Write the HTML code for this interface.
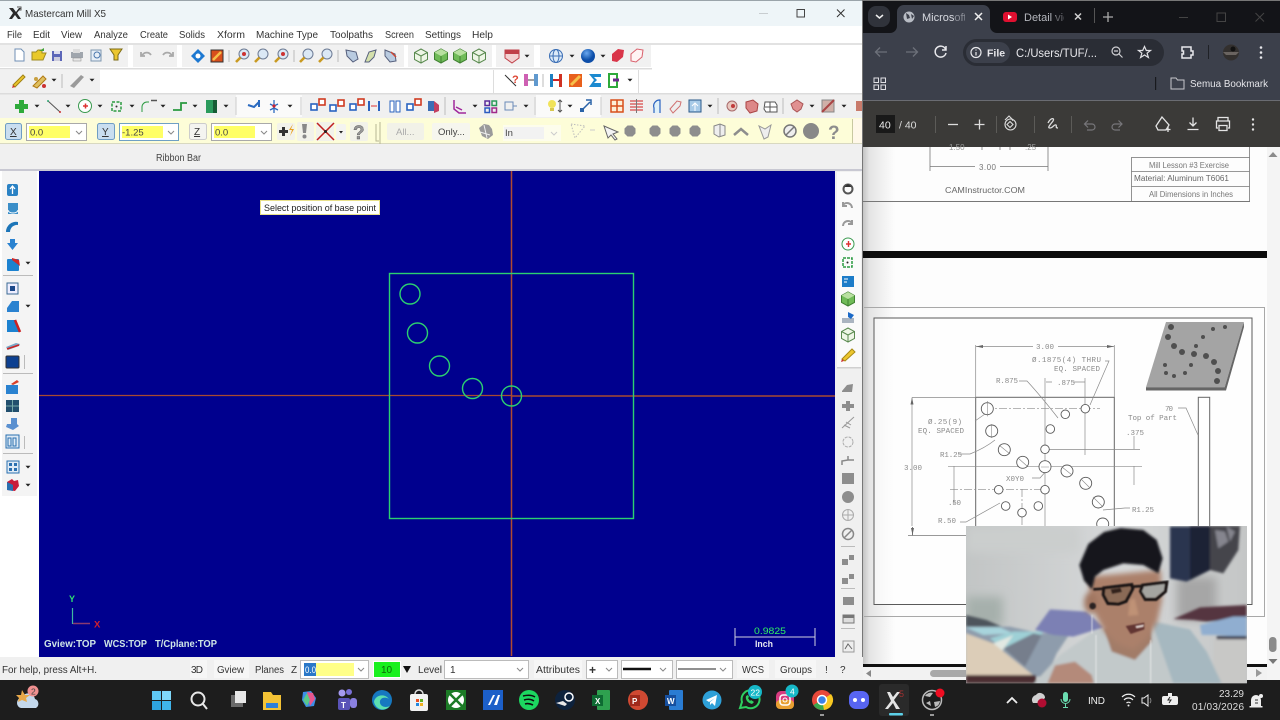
<!DOCTYPE html>
<html><head><meta charset="utf-8"><title>Mastercam Mill X5</title>
<style>
html,body{margin:0;padding:0;background:#1c1c1c;width:1280px;height:720px;overflow:hidden}
svg{display:block;font-family:"Liberation Sans",sans-serif;filter:blur(.3px)}
text{white-space:pre}
.m{font-size:10.5px;fill:#333}
.d{font-family:"Liberation Mono",monospace;font-size:7.5px;fill:#8a8a8a}
.dl{stroke:#8a8a8a;stroke-width:.7;fill:none}
.c{fill:#fff;stroke:#5a5a5a;stroke-width:.9}
.g{fill:#8d8d8d}
</style></head><body>
<svg width="1280" height="720" viewBox="0 0 1280 720" xmlns="http://www.w3.org/2000/svg">
<defs>
<filter id="b1"><feGaussianBlur stdDeviation=".35"/></filter>
<filter id="b0"><feGaussianBlur stdDeviation="2"/></filter>
<filter id="b2"><feGaussianBlur stdDeviation="4"/></filter>
<filter id="b4"><feGaussianBlur stdDeviation="8"/></filter>
<filter id="b3"><feGaussianBlur stdDeviation="14"/></filter>
<clipPath id="cam"><rect x="18" y="18" width="843" height="472"/></clipPath>
<clipPath id="tab1"><rect x="920" y="5" width="45" height="24"/></clipPath>
<clipPath id="tab2"><rect x="1022" y="5" width="42" height="24"/></clipPath>
<clipPath id="part"><rect x="864" y="308" width="400" height="218"/></clipPath>
<linearGradient id="wall" x1="0" x2="1"><stop offset="0" stop-color="#c2c5c5"/><stop offset=".55" stop-color="#d6d8d9"/><stop offset="1" stop-color="#c4c6c6"/></linearGradient>
<linearGradient id="edge" x1="0" x2="1"><stop offset="0" stop-color="#c4c4c4"/><stop offset=".2" stop-color="#e4e4e4"/><stop offset="1" stop-color="#e4e4e4" stop-opacity="0"/></linearGradient>
<radialGradient id="sph" cx=".4" cy=".3"><stop offset="0" stop-color="#6aa8ef"/><stop offset="1" stop-color="#0b4ea8"/></radialGradient>
<g id="dr"><path d="M-2.5 -1.3H2.5L0 1.5Z" fill="#222"/></g>
<g id="cube"><path d="M0-7 6.5-3.5V3.5L0 7-6.5 3.5V-3.5Z" fill="#eef6e6" stroke="#5a8a50"/><path d="M-6.5-3.5 0 0 6.5-3.5M0 0V7" fill="none" stroke="#5a8a50"/></g>
<g id="cubeg"><path d="M0-7 6.5-3.5V3.5L0 7-6.5 3.5V-3.5Z" fill="#6fbb58" stroke="#3f8030"/><path d="M-6.5-3.5 0 0 6.5-3.5 0-7Z" fill="#b8e0a0"/><path d="M0 0V7" stroke="#3f8030"/></g>
<g id="zoom"><circle cx="1" cy="-2" r="5" fill="#dbe8f5" stroke="#6c7a94"/><path d="M-2.5 1.5-7 6" stroke="#c99a20" stroke-width="2.6"/></g>
<g id="dot"><path d="M-5.5-2.5-2.5-5.5H2.5L5.5-2.5V2.5L2.5 5.5H-2.5L-5.5 2.5Z" fill="#8d8d8d"/></g>
<g id="xf"><rect x="-7" y="-2" width="6" height="6" fill="#fff" stroke="#2a63c0" stroke-width="1.6"/><rect x="1" y="-7" width="6" height="6" fill="#fff" stroke="#cf3a20" stroke-width="1.6"/></g>
</defs>

<!-- LEFT WINDOW -->
<rect width="863" height="681" fill="#f0f0f0"/>
<rect width="863" height="26" fill="#eef5f8"/>
<rect width="863" height="1" fill="#9aa4aa"/>
<path d="M9 8 13 8 16 12 19 8 21 8 17 13 21 19 18 19 15 15 12 19 9 19 13 13Z" fill="#2a2a2a"/><path d="M17 7h4v3h-2" fill="none" stroke="#555"/>
<text x="25" y="17" font-size="10.5" fill="#333" textLength="81" lengthAdjust="spacingAndGlyphs">Mastercam Mill X5</text>
<rect x="759" y="13" width="9" height="1" fill="#c8cdd0"/>
<rect x="797" y="9.5" width="7.5" height="7.5" fill="none" stroke="#444"/>
<path d="M837 9.500 844.500 17M844.500 9.500 837 17" stroke="#333" stroke-width="1"/>
<rect y="26" width="863" height="17" fill="#fff"/>
<g class="m">
<text x="7" y="38" textLength="15" lengthAdjust="spacingAndGlyphs">File</text><text x="33" y="38" textLength="17" lengthAdjust="spacingAndGlyphs">Edit</text><text x="61" y="38" textLength="21" lengthAdjust="spacingAndGlyphs">View</text><text x="94" y="38" textLength="34" lengthAdjust="spacingAndGlyphs">Analyze</text><text x="140" y="38" textLength="28" lengthAdjust="spacingAndGlyphs">Create</text><text x="179" y="38" textLength="26" lengthAdjust="spacingAndGlyphs">Solids</text><text x="217" y="38" textLength="28" lengthAdjust="spacingAndGlyphs">Xform</text><text x="256" y="38" textLength="62" lengthAdjust="spacingAndGlyphs">Machine Type</text><text x="330" y="38" textLength="43" lengthAdjust="spacingAndGlyphs">Toolpaths</text><text x="385" y="38" textLength="29" lengthAdjust="spacingAndGlyphs">Screen</text><text x="425" y="38" textLength="36" lengthAdjust="spacingAndGlyphs">Settings</text><text x="472" y="38" textLength="21" lengthAdjust="spacingAndGlyphs">Help</text>
</g>
<!-- toolbar backgrounds -->
<rect y="43" width="863" height="2" fill="#e2e2e2"/>
<rect x="0" y="45" width="863" height="24" fill="#fff"/>
<rect x="0" y="69" width="863" height="25" fill="#fff"/>
<rect y="94" width="863" height="24" fill="#f0f0f0"/>
<rect y="68" width="652" height="1.500" fill="#dcdcdc"/>
<rect x="0" y="45" width="128" height="22" fill="#f1f1f1"/><rect x="133" y="45" width="44" height="22" fill="#f1f1f1"/><rect x="182" y="45" width="222" height="22" fill="#f1f1f1"/><rect x="408" y="45" width="84" height="22" fill="#f1f1f1"/><rect x="496" y="45" width="38" height="22" fill="#f1f1f1"/><rect x="540" y="45" width="111" height="22" fill="#f1f1f1"/>
<rect x="0" y="70" width="100" height="23" fill="#f1f1f1"/><rect x="493" y="70" width="1" height="23" fill="#ddd"/><rect x="638" y="70" width="1" height="23" fill="#ddd"/>
<rect y="93" width="863" height="1.500" fill="#dcdcdc"/>
<rect x="236" y="95" width="66" height="22" fill="#fafafa"/><rect x="536" y="95" width="65" height="22" fill="#fafafa"/>

<!-- toolbar 1 icons -->
<g filter="url(#b1)">
<path d="M15 49h6l3 3v9H15Z" fill="#fff" stroke="#6f8fb5"/>
<path d="M32 60V52h4l2-2h4v3h4l-3 7Z" fill="#e9c92c" stroke="#a08b20"/><path d="M39 51l5-3v3" fill="#45a33a"/>
<rect x="52" y="51" width="10" height="10" fill="#5b66b8"/><rect x="54" y="51" width="6" height="3" fill="#dde"/><rect x="54" y="57" width="6" height="4" fill="#ccd"/>
<path d="M71 52h12v6H71Z" fill="#a0a6ad"/><rect x="73" y="49" width="7" height="4" fill="#ddd"/><rect x="73" y="58" width="8" height="3" fill="#e8e8e8" stroke="#888" stroke-width=".5"/>
<rect x="91" y="50" width="10" height="11" fill="#e7eef6" stroke="#7d96b0"/><circle cx="97" cy="55" r="3" fill="none" stroke="#4a77ad"/>
<path d="M110 49h12l-4 6v5h-4v-5Z" fill="#ecc62e" stroke="#7b6a14"/>
<path d="M142 56a5 5 0 0 1 9-1M141 52v4h4" fill="none" stroke="#a9a9a9" stroke-width="1.800"/><path d="M172 56a5 5 0 0 0-9-1M173 52v4h-4" fill="none" stroke="#a9a9a9" stroke-width="1.800"/>
<path d="M198 49 205 56 198 63 191 56Z" fill="#1f78d1"/><circle cx="198" cy="56" r="2.500" fill="#fff"/>
<rect x="211" y="50" width="12" height="12" fill="#d8501c" stroke="#333"/><path d="M213 60 221 52" stroke="#f6c048" stroke-width="2.500"/>
<use href="#zoom" x="243" y="56"/><circle cx="244" cy="54" r="2" fill="#c33"/><line x1="229" y1="50" x2="229" y2="62" stroke="#bbb"/>
<use href="#zoom" x="262" y="56"/><use href="#zoom" x="282" y="56"/><circle cx="283" cy="54" r="2" fill="#c33"/><line x1="294" y1="50" x2="294" y2="62" stroke="#bbb"/>
<use href="#zoom" x="307" y="56"/><use href="#zoom" x="326" y="56"/><line x1="338" y1="50" x2="338" y2="62" stroke="#bbb"/>
<path d="M346 50l10 2 2 7-5 3-6-6Z" fill="#b9cbe0" stroke="#555f7c"/><path d="M365 62l4-10 7-2-2 7-5 5Z" fill="#d4e0ac" stroke="#555f7c"/><path d="M385 50l10 4 1 7-6 1-5-6Z" fill="#b9cbe0" stroke="#555f7c"/><path d="M391 52l5 5" stroke="#c43" stroke-width="1.500"/>
<use href="#cube" x="421" y="56"/><use href="#cubeg" x="441" y="56"/><use href="#cubeg" x="460" y="56"/><use href="#cube" x="479" y="56"/>
<path d="M505 50h14v8l-7 5-7-5Z" fill="#f3d2d2" stroke="#c0404a"/><rect x="505" y="50" width="14" height="4" fill="#c0404a"/><use href="#dr" x="527" y="56"/>
<circle cx="556" cy="56" r="6.500" fill="#dceaf8" stroke="#3a6eb5"/><ellipse cx="556" cy="56" rx="3" ry="6.500" fill="none" stroke="#3a6eb5"/><path d="M549.500 56h13" stroke="#3a6eb5"/><use href="#dr" x="572" y="56"/>
<circle cx="588" cy="56" r="7" fill="url(#sph)"/><use href="#dr" x="603" y="56"/>
<path d="M612 54l6-5 6 1-1 7-6 5-5-1Z" fill="#d9364a"/><path d="M631 54l6-5 6 1-1 7-6 5-5-1Z" fill="#fff4f4" stroke="#d9606c"/>
</g>
<!-- toolbar 2 icons -->
<g filter="url(#b1)">
<path d="M13 85 23 75l2 2-10 10Z" fill="#ecc62e" stroke="#a08214"/><path d="M12 88l3-1-2-2Z" fill="#c33"/>
<path d="M33 86 43 76l3 3-9 9Z" fill="#dfc060" stroke="#b07a14"/><circle cx="36" cy="79" r="2" fill="#c8a040"/><circle cx="44" cy="86" r="2" fill="#c33"/><use href="#dr" x="54" y="80"/>
<line x1="62" y1="74" x2="62" y2="88" stroke="#bbb"/>
<path d="M70 86 81 75l3 2-10 11Z" fill="#9a9a9a"/><use href="#dr" x="92" y="80"/>
<path d="M505 75 516 86" stroke="#333"/><text x="512" y="83" font-size="11" font-weight="bold" fill="#d43">?</text>
<rect x="524" y="74" width="4" height="12" fill="#c23aa0" opacity=".8"/><rect x="534" y="74" width="4" height="12" fill="#3a7fc2" opacity=".8"/><path d="M528 80h6" stroke="#444"/>
<line x1="543" y1="74" x2="543" y2="87" stroke="#bbb"/>
<rect x="550" y="74" width="3" height="13" fill="#1d7fc0"/><path d="M553 80h6" stroke="#d02020" stroke-width="2"/><rect x="559" y="74" width="3" height="13" fill="#d03020"/>
<rect x="569" y="74" width="13" height="13" fill="#e8601c"/><path d="M571 85 580 76" stroke="#f6c048" stroke-width="3"/>
<path d="M589 74h12v3h-7l3 3-3 3h7v4H589l5-7Z" fill="#1d8ad0"/>
<rect x="609" y="74" width="8" height="13" fill="#fff" stroke="#2eaa3a" stroke-width="2"/><path d="M613 80h6" stroke="#6a2a8a" stroke-width="3"/><use href="#dr" x="630" y="80"/>
</g>
<!-- toolbar 3 icons -->
<g filter="url(#b1)">
<path d="M19 100h5v4h4v5h-4v4h-5v-4h-4v-5h4Z" fill="#2eaa3a"/><use href="#dr" x="37" y="106"/>
<path d="M48 101 60 112" stroke="#555"/><circle cx="48" cy="101" r="1" fill="#3a7"/><circle cx="60" cy="112" r="1" fill="#c33"/><use href="#dr" x="68" y="106"/>
<circle cx="85" cy="106" r="6.500" fill="#fff" stroke="#3a9a50"/><path d="M83 106h5M85.500 103.500v5" stroke="#d33" stroke-width="1.500"/><use href="#dr" x="100" y="106"/>
<rect x="112" y="102" width="9" height="9" fill="none" stroke="#2a9a40" stroke-dasharray="3 1.500" stroke-width="1.500"/><circle cx="116.500" cy="106.500" r="1" fill="#333"/><use href="#dr" x="132" y="106"/>
<path d="M142 112v-5a5 5 0 0 1 5-5h2" fill="none" stroke="#2a9a40"/><path d="M151 100.500h6" stroke="#555" stroke-width="1.500"/><use href="#dr" x="163" y="106"/>
<path d="M173 110h8v-7h6" fill="none" stroke="#2a9a40" stroke-width="1.800"/><use href="#dr" x="195" y="106"/>
<rect x="206" y="100" width="11" height="13" fill="#2c9a5c"/><rect x="213" y="100" width="4" height="13" fill="#145c34"/><use href="#dr" x="226" y="106"/>
<line x1="236" y1="97" x2="236" y2="115" stroke="#ccc"/>
<path d="M248 105l6 2 5-5M259 100v7" fill="none" stroke="#2a6ac0" stroke-width="2"/><path d="M274 100v13M270 104l4 2 4-2M270 110l4-2 4 2" fill="none" stroke="#2a6ac0" stroke-width="1.300"/><circle cx="274" cy="106" r="1.600" fill="#c23"/><use href="#dr" x="290" y="106"/>
<line x1="301" y1="97" x2="301" y2="115" stroke="#ccc"/>
<use href="#xf" x="318" y="106"/><use href="#xf" x="337" y="107"/><use href="#xf" x="357" y="106"/>
<path d="M369 101v10M379 101v10" stroke="#2a63c0" stroke-width="2"/><path d="M371 106h6" stroke="#d33"/>
<rect x="390" y="101" width="4" height="11" fill="#fff" stroke="#2a63c0"/><rect x="396" y="101" width="4" height="11" fill="#fff" stroke="#2a63c0"/>
<use href="#xf" x="414" y="106"/><path d="M428 101h6v10h-6" fill="#3a6eb5"/><path d="M434 101 439 105v6l-5 2Z" fill="#c34060"/>
<line x1="445" y1="97" x2="445" y2="115" stroke="#bbb"/>
<path d="M454 100v9l5 4h7M456 107l6 3" fill="none" stroke="#a0289c" stroke-width="1.500"/><use href="#dr" x="475" y="106"/>
<rect x="485" y="101" width="4.500" height="4.500" fill="none" stroke="#5a2a9a" stroke-width="1.500"/><rect x="492" y="101" width="4.500" height="4.500" fill="none" stroke="#2a9a5a" stroke-width="1.500"/><rect x="485" y="108" width="4.500" height="4.500" fill="none" stroke="#2a5ac0" stroke-width="1.500"/><rect x="492" y="108" width="4.500" height="4.500" fill="none" stroke="#a02a8a" stroke-width="1.500"/>
<rect x="505" y="102" width="8" height="8" fill="none" stroke="#6a8ab8"/><path d="M513 106h4" stroke="#6a8ab8"/><use href="#dr" x="526" y="106"/>
<line x1="535" y1="97" x2="535" y2="115" stroke="#ccc"/>
<circle cx="552" cy="104" r="4" fill="#f1e35a"/><rect x="550" y="108" width="4" height="3" fill="#d8c850"/><path d="M560 100v12M558 102l2-2 2 2M558 110l2 2 2-2" stroke="#555" fill="none"/><use href="#dr" x="570" y="106"/>
<path d="M581 111l9-9M586 100h5v5" stroke="#2a63a8" fill="none" stroke-width="1.500"/><rect x="580" y="108" width="4" height="4" fill="#2a63a8"/>
<line x1="601" y1="97" x2="601" y2="115" stroke="#ccc"/>
<rect x="611" y="100" width="12" height="12" fill="#fdf0d8" stroke="#d8501c" stroke-width="1.500"/><path d="M617 100v12M611 106h12" stroke="#d8501c" stroke-width="1.500"/>
<path d="M630 101h13M630 104h13M630 107h13M630 110h13" stroke="#d84a4a" stroke-width="1.300"/><path d="M636.500 99v14" stroke="#777"/>
<path d="M654 113v-5a6 6 0 0 1 6-8v13" fill="#dff0f8" stroke="#2a63c0" stroke-width="1.200"/>
<path d="M670 109l7-8 4 1-1 4-7 7Z" fill="#eee" stroke="#d07070"/>
<rect x="689" y="100" width="12" height="12" fill="#a8cbe8" stroke="#2a5a8a"/><path d="M695 103v8M692 106l3-3 3 3" stroke="#fff" fill="none"/><use href="#dr" x="710" y="106"/>
<line x1="718" y1="98" x2="718" y2="114" stroke="#bbb"/>
<circle cx="732" cy="106" r="5" fill="#e8c8c0" stroke="#a86a6a"/><circle cx="733" cy="106" r="2" fill="#c03a3a"/>
<path d="M746 102l7-2 5 4-1 7-7 2-4-5Z" fill="#d88" stroke="#a44"/>
<path d="M765 102h10l2 3v7h-11l-2-3Z" fill="#fff" stroke="#555"/><path d="M770 102v10M765 107h12" stroke="#555"/>
<line x1="783" y1="98" x2="783" y2="114" stroke="#bbb"/>
<path d="M791 104l6-4 6 4-2 5-4 3-4-3Z" fill="#e09090" stroke="#a55"/><use href="#dr" x="812" y="106"/>
<rect x="822" y="100" width="12" height="12" fill="#d0b0a8" stroke="#888"/><path d="M822 112 834 100" stroke="#a44" stroke-width="2"/><use href="#dr" x="844" y="106"/>
<rect x="856" y="101" width="6" height="10" fill="#c87a6a"/>
</g>

<!-- yellow bar -->
<rect y="118" width="863" height="26" fill="#fdfdd8"/>
<rect y="143" width="863" height="1" fill="#d8d8c0"/>
<rect x="5.500" y="123.500" width="16" height="16" rx="2" fill="#c9def0" stroke="#6f9dc4"/>
<text x="10" y="135" font-size="10" fill="#333" text-decoration="underline">X</text>
<rect x="26.500" y="123.500" width="60" height="17" fill="#fff" stroke="#a9a9a9"/><rect x="29" y="126" width="41" height="12" fill="#ffff66"/>
<text x="30" y="135.500" font-size="9.500" fill="#444">0.0</text><path d="M76 131l3 3 3-3" fill="none" stroke="#888"/>
<rect x="97.500" y="123.500" width="17" height="16" rx="2" fill="#c9def0" stroke="#6f9dc4"/>
<text x="102" y="135" font-size="10" fill="#333" text-decoration="underline">Y</text>
<rect x="119.500" y="123.500" width="59" height="17" fill="#fff" stroke="#6fa0c4"/><rect x="122" y="126" width="41" height="12" fill="#ffff66"/>
<text x="122" y="135.500" font-size="9.500" fill="#444">-1.25</text><path d="M168 131l3 3 3-3" fill="none" stroke="#888"/>
<rect x="189.500" y="123.500" width="17" height="16" rx="2" fill="#f4f4f0" stroke="#ccc"/>
<text x="194" y="135" font-size="10" fill="#333" text-decoration="underline">Z</text>
<rect x="211.500" y="123.500" width="60" height="17" fill="#fff" stroke="#a9a9a9"/><rect x="214" y="126" width="41" height="12" fill="#ffff66"/>
<text x="215" y="135.500" font-size="9.500" fill="#444">0.0</text><path d="M261 131l3 3 3-3" fill="none" stroke="#888"/>
<rect x="277" y="123" width="18" height="17" rx="2" fill="#f2f2ea"/><path d="M279 130h3v-3h3v3h3v3h-3v3h-3v-3h-3Z" fill="#333"/><path d="M293 124l-4 6h3l-2 6 4-7h-3Z" fill="#e8a020"/>
<rect x="297" y="122" width="17" height="19" rx="2" fill="#f2f2ea"/><path d="M302 124h5l-1 9h-3Z" fill="#888"/><circle cx="304.500" cy="136.500" r="2" fill="#888"/>
<rect x="316" y="122" width="18" height="19" fill="#f2f2ea"/><path d="M317 123 334 140M334 123 317 140" stroke="#c02020" stroke-width="1.500"/><circle cx="325.500" cy="131.500" r="1.500" fill="#222"/>
<rect x="336" y="124" width="10" height="16" rx="2" fill="#f4f4f0"/><path d="M339 131h4l-2 2.500Z" fill="#222"/>
<rect x="350" y="122" width="18" height="19" rx="2" fill="#f2f2ea"/><text x="353" y="139" font-size="19" font-weight="bold" fill="#999" stroke="#555" stroke-width=".4">?</text>
<path d="M376 124v17h3" fill="none" stroke="#b8b894"/><path d="M380 122v22" stroke="#b8b894"/>
<rect x="387" y="123" width="37" height="17" rx="2" fill="#f2f2e8"/><text x="396" y="135" font-size="9.500" fill="#aaa">All...</text>
<rect x="432" y="123" width="38" height="17" rx="2" fill="#f6f6ee"/><text x="438" y="135" font-size="9.500" fill="#444">Only...</text>
<path d="M479 128l5-4 5 1 3 4 1 6-5 4-6-3Z" fill="#9a9a9a"/><path d="M480 132l10 3M484 125l3 13" stroke="#eee"/>
<rect x="503" y="125" width="58" height="16" fill="#fdfdec"/><rect x="504" y="127" width="40" height="12" fill="#f2f2f2"/><text x="505" y="136" font-size="9.500" fill="#444">In</text><path d="M551 132l3 3 3-3" fill="none" stroke="#ccc"/>
<path d="M571 124l14 2-10 12Z" fill="none" stroke="#bbb" stroke-dasharray="1.500 1.500"/><path d="M590 130h5" stroke="#ccc"/>
<path d="M604 126l14 6-5 2 4 5-2 1-4-5-3 3Z" fill="#f4f4f4" stroke="#666"/>
<use href="#dot" x="630" y="131"/><use href="#dot" x="655" y="131"/><use href="#dot" x="675" y="131"/><use href="#dot" x="695" y="131"/>
<path d="M714 126l6-2 5 2v9l-6 2-5-3Z" fill="#eee" stroke="#888"/><path d="M720 124v13" stroke="#888"/><path d="M734 135l7-6 7 6" fill="none" stroke="#8d8d8d" stroke-width="2.500"/>
<path d="M759 126l6 3 6-4-3 12-4 2Z" fill="#eee" stroke="#999"/>
<circle cx="790" cy="131" r="6" fill="#eee" stroke="#777" stroke-width="1.500"/><path d="M786 135l8-8" stroke="#777" stroke-width="1.500"/>
<circle cx="811" cy="131" r="8" fill="#888"/>
<text x="828" y="139" font-size="19" font-weight="bold" fill="#8d8d8d">?</text>
<path d="M852.500 119v24" stroke="#c8c8a0"/><rect x="853" y="119" width="10" height="24" fill="#fff8e8"/>

<!-- ribbon -->
<rect y="144" width="863" height="26" fill="#f0f0f0"/>
<text x="156" y="161" font-size="10" fill="#444" textLength="45" lengthAdjust="spacingAndGlyphs">Ribbon Bar</text>
<rect y="169" width="863" height="2" fill="#c8c8d2"/>

<!-- left toolbar -->
<rect x="0" y="171" width="39" height="486" fill="#fff"/>
<rect x="2" y="171" width="35" height="325" fill="#f4f4f4"/>
<g filter="url(#b1)">
<rect x="7" y="184" width="11" height="12" rx="2" fill="#2b82c4"/><path d="M12.500 186v8M10 189l2.500-3 2.500 3" stroke="#fff" fill="none" stroke-width="1.300"/>
<path d="M8 203h10v11H8Z" fill="#3a8ec8"/><path d="M8 210a5 3 0 0 0 10 0" stroke="#fff" fill="none"/>
<path d="M6 232a10 10 0 0 1 12-10v3a7 7 0 0 0-8 7Z" fill="#1c74b8"/>
<path d="M10 239h5v4h3l-5.500 7-5.500-7h3Z" fill="#2b82d0"/>
<rect x="7" y="259" width="12" height="12" rx="1" fill="#1a82d0"/><path d="M12 258l7 2 1 6-8-6Z" fill="#cf2a2a"/><use href="#dr" x="28" y="263"/>
<rect x="3" y="275" width="30" height="1" fill="#bbb"/>
<rect x="7" y="283" width="11" height="11" fill="#eef" stroke="#3a6a94"/><rect x="10" y="286" width="5" height="5" fill="#1a4a8a"/>
<path d="M7 308l5-7h7v11H7Z" fill="#2b82d0"/><use href="#dr" x="28" y="306"/>
<path d="M7 320h8l5 10v2H7Z" fill="#1a82d0"/><path d="M15 320l5 12" stroke="#c22" stroke-width="2.500"/>
<path d="M6 347l10-4 4 1-1 2-11 4Z" fill="#7aa8c8"/><path d="M7 349l12-4" stroke="#c22" stroke-width="1.500"/>
<rect x="6" y="356" width="13" height="12" rx="1" fill="#0b3f90" stroke="#333"/><line x1="24.500" y1="355" x2="24.500" y2="369" stroke="#bbb"/>
<rect x="3" y="373" width="30" height="1" fill="#bbb"/>
<rect x="6" y="385" width="12" height="9" fill="#2b82d0"/><path d="M11 384l6-4 2 2-6 3Z" fill="#d8402a"/>
<rect x="6" y="400" width="13" height="12" fill="#23506e"/><path d="M12.500 400v12M6 406h13" stroke="#7aa" /> 
<path d="M7 424h4v-6h6v6l2 2-6 4-7-3Z" fill="#5a90d0"/>
<rect x="6" y="435" width="13" height="13" fill="#dfeaf5" stroke="#2a70b0"/><rect x="8" y="438" width="3" height="8" fill="none" stroke="#2a70b0"/><rect x="13" y="438" width="3" height="8" fill="none" stroke="#2a70b0"/><line x1="24.500" y1="436" x2="24.500" y2="449" stroke="#bbb"/>
<rect x="3" y="453" width="30" height="1" fill="#bbb"/>
<rect x="7" y="461" width="12" height="12" fill="#dfeaf5" stroke="#2a70b0"/><rect x="9" y="463" width="3" height="3" fill="#2a70b0"/><rect x="14" y="463" width="3" height="3" fill="#2a70b0"/><rect x="9" y="468" width="3" height="3" fill="#2a70b0"/><rect x="14" y="468" width="3" height="3" fill="#2a70b0"/><use href="#dr" x="28" y="467"/>
<path d="M7 482l5-3 2 2 4-1 1 6-4 5-8-1Z" fill="#c81e3a"/><path d="M7 482v8l6 1v-6Z" fill="#2a70b0"/><use href="#dr" x="28" y="485"/>
</g>

<!-- canvas -->
<rect x="39" y="171" width="796" height="486" fill="#00008e"/>
<path d="M511.500 171V656" stroke="#b04a30" stroke-width="1.500"/>
<path d="M39 395.500H512" stroke="#a84a30" stroke-width="1.200"/>
<path d="M512 396H835" stroke="#a84a30" stroke-width="1.500"/>
<g fill="none" stroke="#2cd070" stroke-width="1.400">
<rect x="389.500" y="273.500" width="244" height="245"/>
<circle cx="410" cy="294" r="10"/><circle cx="417.500" cy="333" r="10"/><circle cx="439.500" cy="366" r="10"/><circle cx="472.500" cy="388.500" r="10"/><circle cx="511.500" cy="396" r="10"/>
</g>
<rect x="260.500" y="200.500" width="119" height="14" fill="#fff" stroke="#e8e08a"/>
<text x="264" y="211" font-size="9" fill="#222" textLength="112" lengthAdjust="spacingAndGlyphs">Select position of base point</text>
<path d="M72.500 608V624" stroke="#3fb8a0" stroke-width="1.200"/><text x="69" y="602" font-size="9" font-weight="bold" fill="#2fe070">Y</text>
<path d="M73 623.500H90" stroke="#8a3a70" stroke-width="1.500"/><text x="94" y="627.500" font-size="9.500" font-weight="bold" fill="#d02030">X</text>
<g font-size="10" fill="#cfe6e6" font-weight="bold">
<text x="44" y="647" textLength="52" lengthAdjust="spacingAndGlyphs">Gview:TOP</text><text x="104" y="647" textLength="43" lengthAdjust="spacingAndGlyphs">WCS:TOP</text><text x="155" y="647" textLength="62" lengthAdjust="spacingAndGlyphs">T/Cplane:TOP</text>
</g>
<path d="M735 628V646M815 628V646M735 637H815" stroke="#d0d0e0"/>
<text x="754" y="634" font-size="9.500" fill="#30f060" textLength="32" lengthAdjust="spacingAndGlyphs">0.9825</text>
<text x="755" y="647" font-size="9.500" fill="#e8e8f0" font-weight="bold" textLength="18" lengthAdjust="spacingAndGlyphs">Inch</text>

<!-- right toolbar -->
<rect x="835" y="171" width="28" height="486" fill="#f0f0f0"/>
<rect x="837" y="172" width="24" height="195" fill="#fafafa"/>
<g filter="url(#b1)">
<circle cx="848" cy="189" r="4.500" fill="none" stroke="#555" stroke-width="2"/><path d="M844 187l4-3 4 3" fill="#333"/>
<path d="M843 208a5 5 0 0 1 9-3M852 202v4h-4" fill="none" stroke="#999" stroke-width="2" transform="matrix(-1 0 0 1 1695 0)"/>
<path d="M843 226a5 5 0 0 1 9-3M852 220v4h-4" fill="none" stroke="#999" stroke-width="2"/>
<circle cx="848" cy="244" r="6" fill="#fff" stroke="#3a9a50"/><path d="M846 244h5M848.500 241v6" stroke="#d33" stroke-width="1.400"/>
<rect x="843" y="258" width="9" height="9" fill="none" stroke="#2a9a40" stroke-width="1.500" stroke-dasharray="3 1"/><circle cx="847.500" cy="262.500" r="1" fill="#222"/>
<rect x="842" y="276" width="12" height="11" fill="#1a7cc8"/><path d="M844 279h4M844 282h3" stroke="#fff"/>
<use href="#cubeg" x="848" y="299"/>
<path d="M842 323v-5h12v5Z" fill="#aab4c0"/><path d="M848 312l6 3-3 4-3-2Z" fill="#1a6ac8"/>
<use href="#cube" x="848" y="335"/>
<path d="M842 359 852 349l3 3-10 9Z" fill="#ecc62e" stroke="#a88a14"/><path d="M841 362l3-1-2-2Z" fill="#c33"/>
<rect x="837" y="367" width="24" height="1.500" fill="#d0d0d0"/>
<path d="M842 391l5-6 6-1-1 8h-10Z" class="g"/>
<path d="M846 401h4v3h4v4h-4v3h-4v-3h-4v-4h4Z" class="g"/>
<path d="M842 428 854 417M844 425l6 3M846 422l5 3" stroke="#999" fill="none"/>
<circle cx="848" cy="442" r="5" fill="none" stroke="#aaa" stroke-dasharray="3 1"/>
<path d="M842 465v-4l6-1v-4M848 460h6" stroke="#888" fill="none" stroke-width="1.500"/>
<rect x="842" y="473" width="12" height="11" class="g"/>
<circle cx="848" cy="497" r="6" class="g"/>
<circle cx="848" cy="515" r="5.500" fill="none" stroke="#aaa"/><path d="M842.500 515h11M848 509.500v11" stroke="#aaa"/>
<circle cx="848" cy="534" r="5.500" fill="none" stroke="#888" stroke-width="1.500"/><path d="M844 538l8-8" stroke="#888" stroke-width="1.500"/>
<rect x="841" y="546" width="14" height="1" fill="#bbb"/>
<rect x="842" y="559" width="6" height="6" class="g"/><rect x="849" y="555" width="5" height="5" class="g"/>
<rect x="842" y="578" width="6" height="6" class="g"/><rect x="849" y="574" width="5" height="5" class="g"/>
<rect x="841" y="588" width="14" height="1" fill="#bbb"/>
<rect x="843" y="597" width="11" height="8" class="g"/>
<rect x="843" y="615" width="11" height="8" fill="#ddd" stroke="#777"/><rect x="843" y="615" width="11" height="3" fill="#777"/>
<rect x="841" y="628" width="14" height="1" fill="#bbb"/>
<rect x="843" y="641" width="11" height="11" fill="#eee" stroke="#999"/><path d="M845 649l3-5 4 5" stroke="#666" fill="none"/>
</g>
<rect x="862" y="0" width="1" height="681" fill="#777"/>

<!-- status bar -->
<rect y="657" width="863" height="23" fill="#f0f0f0"/>
<g font-size="10" fill="#333">
<text x="2" y="673" textLength="95" lengthAdjust="spacingAndGlyphs">For help, press Alt+H.</text>
<rect x="190" y="660" width="17" height="18" fill="#f6f6f6"/><text x="191" y="673" textLength="12">3D</text>
<rect x="214" y="660" width="35" height="18" fill="#f6f6f6"/><text x="217" y="673" textLength="27" lengthAdjust="spacingAndGlyphs">Gview</text>
<text x="255" y="673" textLength="29" lengthAdjust="spacingAndGlyphs">Planes</text>
<text x="291" y="673">Z</text>
<rect x="300.500" y="660.500" width="68" height="18" fill="#fff" stroke="#bbb"/><rect x="304" y="663" width="50" height="13" fill="#ffff88"/><rect x="304" y="663" width="12" height="13" fill="#2a78c8"/><text x="305" y="673" fill="#fff" font-size="9" textLength="11" lengthAdjust="spacingAndGlyphs">0.0</text><path d="M358 668l3 3 3-3" fill="none" stroke="#888"/>
<rect x="373" y="661" width="28" height="17" fill="#fff"/><rect x="374" y="662" width="26" height="15" fill="#19f01e"/><text x="381" y="673" fill="#0a6a0a">10</text>
<path d="M403 666h8l-4 7Z" fill="#111"/>
<text x="418" y="673" textLength="24" lengthAdjust="spacingAndGlyphs">Level</text>
<rect x="444.500" y="660.500" width="84" height="18" fill="#fff" stroke="#bbb"/><text x="450" y="673">1</text><path d="M517 668l3 3 3-3" fill="none" stroke="#888"/>
<rect x="534" y="660" width="48" height="18" fill="#f6f6f6"/><text x="536" y="673" textLength="44" lengthAdjust="spacingAndGlyphs">Attributes</text>
<rect x="586.500" y="660.500" width="31" height="18" fill="#fff" stroke="#bbb"/><text x="589" y="674" font-size="12" font-weight="bold">+</text><path d="M606 668l3 3 3-3" fill="none" stroke="#888"/>
<rect x="621.500" y="660.500" width="51" height="18" fill="#fff" stroke="#bbb"/><path d="M623 669h28" stroke="#111" stroke-width="2.500"/><path d="M660 668l3 3 3-3" fill="none" stroke="#888"/>
<rect x="676.500" y="660.500" width="56" height="18" fill="#fff" stroke="#bbb"/><path d="M678 669h38" stroke="#222"/><path d="M720 668l3 3 3-3" fill="none" stroke="#888"/>
<rect x="737" y="660" width="32" height="18" fill="#f6f6f6"/><text x="742" y="673" textLength="22" lengthAdjust="spacingAndGlyphs">WCS</text>
<rect x="775" y="660" width="41" height="18" fill="#f6f6f6"/><text x="780" y="673" textLength="32" lengthAdjust="spacingAndGlyphs">Groups</text>
<text x="825" y="673">!</text><text x="840" y="673">?</text>
</g>

<!-- TASKBAR -->
<rect y="680" width="1280" height="40" fill="#1d1d1d"/>
<g filter="url(#b1)">
<path d="M17 703a6 6 0 0 1 5-6 7 7 0 0 1 13 2 5 5 0 0 1 1 9H21a5 5 0 0 1-4-5Z" fill="#c4d8ec"/><path d="M22 690l3 5 5 0-4 3 1 4-5-2-4 2 1-4-3-3h5Z" fill="#e8a848"/><circle cx="33" cy="691" r="5.500" fill="#f09090"/><text x="31" y="694.500" font-size="8.500" fill="#444">2</text>
<rect x="152" y="691" width="9" height="9" fill="#5ec8f4"/><rect x="162" y="691" width="9" height="9" fill="#80d8fa"/><rect x="152" y="701" width="9" height="9" fill="#2fa4e0"/><rect x="162" y="701" width="9" height="9" fill="#3fb4ea"/>
<circle cx="198" cy="699" r="6.500" fill="none" stroke="#e8e8e8" stroke-width="2"/><path d="M203 704l4 5" stroke="#e8e8e8" stroke-width="2"/>
<rect x="231" y="695" width="12" height="12" fill="#6a6a6a"/><rect x="235" y="691" width="11" height="12" fill="#e8e8e8"/>
<path d="M263 692h8l2 3h8v15h-18Z" fill="#f3c234"/><rect x="266" y="703" width="12" height="5" fill="#2e7fd8"/>
<path d="M303 692l8-1 5 7-2 8-8 1-4-7Z" fill="#3a8fe8"/><path d="M307 692l6 1 2 6-5 7Z" fill="#e8548e"/><path d="M303 700l4-7 3 7-3 6Z" fill="#5ac88a"/>
<circle cx="349" cy="692" r="3" fill="#7a70d8"/><circle cx="342" cy="693" r="3.500" fill="#a69af0"/><rect x="338" y="698" width="12" height="12" rx="2" fill="#5a52b8"/><rect x="350" y="698" width="7" height="10" rx="3" fill="#8a80e0"/><text x="341" y="708" font-size="8" font-weight="bold" fill="#fff">T</text>
<circle cx="382" cy="700" r="10" fill="#1878c0"/><path d="M374 702a8 7 0 0 1 15-3c-4-3-10-1-9 4 1 4 6 5 10 3a9 9 0 0 1-16-4Z" fill="#5ce0b0"/>
<rect x="410" y="694" width="18" height="17" rx="2" fill="#f2f2f2"/><path d="M415 694a4 4 0 0 1 8 0" fill="none" stroke="#ddd" stroke-width="1.500"/><rect x="416" y="699" width="3" height="3" fill="#e85020"/><rect x="420" y="699" width="3" height="3" fill="#60b020"/><rect x="416" y="703" width="3" height="3" fill="#2088e0"/><rect x="420" y="703" width="3" height="3" fill="#f0b020"/>
<rect x="446" y="690" width="20" height="20" fill="#1a7a28"/><circle cx="456" cy="700" r="8" fill="#fff"/><path d="M450 694 462 706M462 694 450 706" stroke="#1a7a28" stroke-width="2.500"/>
<rect x="483" y="690" width="20" height="20" fill="#1e5fc8"/><path d="M488 705l5-10h2l-5 10ZM494 705l4-10h2l-3 10Z" fill="#fff"/>
<circle cx="529" cy="700" r="10" fill="#1ed760"/><path d="M523 696c4-1 9-1 12 1M524 700c3-1 7-1 10 1M525 704c3-1 6 0 8 1" stroke="#111" stroke-width="1.600" fill="none"/>
<circle cx="565" cy="700" r="10" fill="#10203c"/><circle cx="569" cy="697" r="4" fill="none" stroke="#fff" stroke-width="1.500"/><path d="M556 703l9 3 2-2-4-3Z" fill="#e8e8e8"/>
<rect x="597" y="690" width="13" height="20" rx="1" fill="#2ea04f"/><rect x="592" y="695" width="11" height="11" fill="#0f6a33"/><text x="595" y="704" font-size="8" font-weight="bold" fill="#fff">X</text>
<path d="M638 690a10 10 0 0 1 10 10h-10Z" fill="#f09070"/><circle cx="638" cy="700" r="10" fill="#d04a30"/><rect x="630" y="695" width="10" height="11" fill="#a02a1a"/><text x="632" y="704" font-size="8" font-weight="bold" fill="#fff">P</text>
<rect x="669" y="690" width="14" height="20" rx="1" fill="#2b7cd3"/><rect x="665" y="695" width="11" height="11" fill="#14509f"/><text x="667" y="704" font-size="8" font-weight="bold" fill="#fff">W</text>
<circle cx="712" cy="700" r="9.500" fill="#2fa0d8"/><path d="M706 700l11-5-2 11-3-3-2 2v-3l5-4-6 4Z" fill="#fff"/>
<path d="M740 708l2-6a9 9 0 1 1 4 5Z" fill="#1a1a1a" stroke="#2fd060" stroke-width="2"/><path d="M746 696c-1 4 2 7 6 8l2-2-3-2-1 1-2-3 1-1-1-2Z" fill="#2fd060"/><circle cx="755" cy="692" r="7" fill="#18b8c8"/><text x="750.500" y="695.500" font-size="8.500" fill="#fff">22</text>
<rect x="776" y="691" width="18" height="18" rx="5" fill="#d83a80"/><rect x="776" y="700" width="18" height="9" rx="4" fill="#e8a030"/><rect x="780" y="695" width="10" height="10" rx="3" fill="none" stroke="#fff" stroke-width="1.500"/><circle cx="785" cy="700" r="2" fill="none" stroke="#fff"/><circle cx="792" cy="691" r="6.500" fill="#18b8c8"/><text x="790" y="694.500" font-size="8.500" fill="#fff">4</text>
<circle cx="822" cy="700" r="10" fill="#e8483a"/><path d="M822 700 813.500 705A10 10 0 0 0 825 709.500Z" fill="#38a850"/><path d="M822 700 831 694A10 10 0 0 1 824 710Z" fill="#f8c820"/><circle cx="822" cy="700" r="4.500" fill="#3a82e8" stroke="#fff" stroke-width="1.500"/><rect x="820" y="714" width="4" height="2" fill="#999"/>
<rect x="849" y="691" width="20" height="18" rx="7" fill="#5865f2"/><circle cx="855" cy="700" r="2" fill="#fff"/><circle cx="863" cy="700" r="2" fill="#fff"/>
<rect x="879" y="684" width="30" height="32" rx="3" fill="#2a2a2a"/><path d="M887 692l3 0 3 5 4-5 3 0-6 8 6 9h-4l-3-6-5 6h-3l6-8Z" fill="#e4e4e4"/><text x="899" y="697" font-size="9" fill="#a03030">5</text><rect x="889" y="713" width="14" height="2.500" rx="1" fill="#5cd0e8"/>
<circle cx="932" cy="700" r="9.500" fill="none" stroke="#bbb" stroke-width="1.500"/><path d="M925 696a7 7 0 0 1 8-3l-3 4ZM940 701a7 7 0 0 1-5 6l-1-5ZM926 703l4-2 1 5Z" fill="#bbb"/><circle cx="940" cy="693" r="4.500" fill="#f01020"/><rect x="930" y="714" width="4" height="2" fill="#999"/>
<path d="M1007 703l5-5 5 5" fill="none" stroke="#eee" stroke-width="1.800"/>
<path d="M1033 703a5 5 0 0 1 3-8 5 5 0 0 1 9 3l-6 5Z" fill="#d0d0d0"/><circle cx="1042" cy="703" r="4.500" fill="#b01030"/>
<rect x="1063" y="692" width="5" height="10" rx="2.500" fill="#6adcb0"/><path d="M1061 699a4.500 4.500 0 0 0 9 0M1065.500 703v4M1063 707.500h5" stroke="#6adcb0" fill="none"/>
<text x="1088" y="704" font-size="10" fill="#eee" textLength="17">IND</text>
<path d="M1122 697a9 9 0 0 1 13 0M1124 700a6 6 0 0 1 9 0M1126.500 703a3 3 0 0 1 4 0" stroke="#eee" fill="none" stroke-width="1.200"/><circle cx="1128.500" cy="705.500" r="1" fill="#eee"/>
<path d="M1142 698h2l4-3v11l-4-3h-2Z" fill="none" stroke="#eee"/><path d="M1150 698a4 4 0 0 1 0 5" stroke="#888" fill="none"/>
<rect x="1162" y="696" width="16" height="9" rx="2" fill="#eee"/><rect x="1168" y="693" width="4" height="3" fill="#eee"/><path d="M1170 697l-2 3h3l-2 3" stroke="#222" fill="none"/>
<path d="M1251 706v-6a5 5 0 0 1 10 0v6h1.500v1.500h-13V706Z" fill="#eee"/><path d="M1255 700h3M1255 703h3" stroke="#333"/><circle cx="1261" cy="696" r="2" fill="#eee"/>
</g>
<text x="1244" y="697" font-size="10" fill="#ddd" text-anchor="end">23.29</text>
<text x="1244" y="710" font-size="10" fill="#ddd" text-anchor="end" textLength="52">01/03/2026</text>

<!-- CHROME -->
<rect x="863" y="0" width="417" height="33" fill="#131418"/>
<rect x="863" y="0" width="417" height="1" fill="#777"/>
<rect x="868" y="6" width="22" height="21" rx="8" fill="#30333b"/>
<path d="M876 15l3.500 3 3.500-3" fill="none" stroke="#eee" stroke-width="1.500"/>
<path d="M890 33a7 7 0 0 0 7-7V12a7 7 0 0 1 7-7h79a7 7 0 0 1 7 7v14a7 7 0 0 0 7 7Z" fill="#3c404b"/>
<circle cx="909" cy="17" r="5.500" fill="#b8bcc4"/><path d="M906 13l3 2 1 3-3 1ZM911 14l3 2-2 3Z" fill="#3c404b"/>
<text x="922" y="21" font-size="11" fill="#d8dae0" clip-path="url(#tab1)">Microsoft Excel</text>
<rect x="955" y="6" width="10" height="22" fill="#3c404b" opacity=".5"/>
<path d="M975 13l7 7M982 13l-7 7" stroke="#eee" stroke-width="1.500"/>
<rect x="1003" y="12" width="14" height="10" rx="3" fill="#e01030"/><path d="M1008 14.500l4 2.500-4 2.500Z" fill="#fff"/>
<text x="1024" y="21" font-size="11" fill="#b4b6bc" clip-path="url(#tab2)">Detail video</text>
<rect x="1056" y="6" width="8" height="22" fill="#131418" opacity=".5"/>
<path d="M1075 13.500l6 6M1081 13.500l-6 6" stroke="#d0d0d0" stroke-width="1.500"/>
<rect x="1094" y="8" width="1" height="15" fill="#555"/>
<path d="M1108 12v10M1103 17h10" stroke="#aaa" stroke-width="1.300"/>
<rect x="1179" y="17" width="9" height="1" fill="#444"/>
<rect x="1217" y="13" width="8.500" height="8.500" fill="none" stroke="#444"/>
<path d="M1255.500 13l8.500 8.500M1264 13l-8.500 8.500" stroke="#444"/>
<rect x="863" y="33" width="417" height="67" fill="#3c404b"/>
<path d="M887 52h-11M880 47.500 875.500 52 880 56.500" fill="none" stroke="#6d717a" stroke-width="1.300"/>
<path d="M906 52h11M913 47.500 917.500 52 913 56.500" fill="none" stroke="#6d717a" stroke-width="1.300"/>
<path d="M945.500 49a5.500 5.500 0 1 0 .5 4M946 46v4h-4" fill="none" stroke="#e8e8ec" stroke-width="1.500"/>
<rect x="963" y="39" width="201" height="27" rx="13.500" fill="#2a2d35"/>
<rect x="966" y="42" width="44" height="21" rx="10.500" fill="#3c404b"/>
<circle cx="976" cy="52.500" r="5" fill="none" stroke="#e8e8ec" stroke-width="1.200"/><path d="M976 52v3.500M976 49.500v1" stroke="#e8e8ec" stroke-width="1.200"/>
<text x="987" y="56.500" font-size="10.500" font-weight="bold" fill="#e8e8ec">File</text>
<text x="1016" y="57" font-size="12" fill="#e8e8ec" textLength="81" lengthAdjust="spacingAndGlyphs">C:/Users/TUF/...</text>
<circle cx="1116" cy="51" r="4" fill="none" stroke="#d0d0d4" stroke-width="1.200"/><path d="M1119 54l3.500 3.500M1114 51h4" stroke="#d0d0d4" stroke-width="1.200"/>
<path d="M1144.500 46.500l1.800 4h4.200l-3.400 2.700 1.300 4.300-3.900-2.500-3.900 2.500 1.300-4.300-3.400-2.700h4.200Z" fill="none" stroke="#e0e0e4" stroke-width="1.200"/>
<path d="M1182 47h9v4h2v4h-2v3h-9v-4h1.500v-3H1182Z" fill="none" stroke="#e8e8ec" stroke-width="1.500"/>
<rect x="1208" y="45" width="1" height="14" fill="#1f2126"/>
<circle cx="1231" cy="52.500" r="8" fill="#33302e"/><path d="M1223 52h16l-3 3h-10Z" fill="#6a6460"/><circle cx="1233" cy="49" r="2.500" fill="#111"/>
<circle cx="1261" cy="47.500" r="1.300" fill="#e8e8ec"/><circle cx="1261" cy="52.500" r="1.300" fill="#e8e8ec"/><circle cx="1261" cy="57.500" r="1.300" fill="#e8e8ec"/>
<rect x="874" y="78" width="4.500" height="4.500" fill="none" stroke="#e0e0e4"/><rect x="881" y="78" width="4.500" height="4.500" fill="none" stroke="#e0e0e4"/><rect x="874" y="85" width="4.500" height="4.500" fill="none" stroke="#e0e0e4"/><rect x="881" y="85" width="4.500" height="4.500" fill="none" stroke="#e0e0e4"/>
<rect x="1155" y="77" width="1.200" height="13" fill="#18191d"/>
<path d="M1171 78h5l1.500 2h6.500v9h-13Z" fill="none" stroke="#c8c8cc"/>
<text x="1190" y="87" font-size="10.500" fill="#e4e4e8" textLength="78" lengthAdjust="spacingAndGlyphs">Semua Bookmark</text>
<rect x="863" y="100" width="417" height="1" fill="#6a6c72"/>
<!-- pdf toolbar -->
<rect x="863" y="101" width="417" height="46" fill="#3b3a38"/>
<rect x="876" y="115" width="19" height="18" fill="#191919"/>
<text x="879" y="128.500" font-size="10.500" fill="#eee">40</text>
<text x="899" y="128.500" font-size="10.500" fill="#ddd">/ 40</text>
<rect x="935" y="116" width="1" height="17" fill="#5c5b58"/>
<path d="M948 124.500h10" stroke="#ddd" stroke-width="1.300"/><path d="M974.500 124.500h10M979.500 119.500v10" stroke="#ddd" stroke-width="1.300"/>
<rect x="996" y="116" width="1" height="17" fill="#5c5b58"/>
<path d="M1005 120l4-4 4 4-1 .5M1007 124.500l3-3 3 3-3 3Z" fill="none" stroke="#ddd" stroke-width="1.100"/><circle cx="1010.500" cy="124.500" r="5.500" fill="none" stroke="#ddd" stroke-width="1.100"/>
<rect x="1034" y="116" width="1" height="17" fill="#5c5b58"/>
<path d="M1048 123c3-6 7-5 5-2-3 4-6 7-3 7s4-4 6-3c1 1-1 3 2 3" fill="none" stroke="#ddd" stroke-width="1.300"/>
<rect x="1071" y="116" width="1" height="17" fill="#5c5b58"/>
<path d="M1085 124h7a3 3 0 0 1 0 6h-5M1088 120.500l-3.500 3.500 3.500 3.500" fill="none" stroke="#77767a" stroke-width="1.200"/>
<path d="M1122 124h-7a3 3 0 0 0 0 6h5M1118.500 120.500l3.500 3.500-3.500 3.500" fill="none" stroke="#77767a" stroke-width="1.200"/>
<path d="M1162 117l7 8-3 5h-8l-2-4Z" fill="none" stroke="#e4e4e4" stroke-width="1.300"/><path d="M1168 127v5M1165.500 129.500h5" stroke="#e4e4e4" stroke-width="1.300"/>
<path d="M1193 117.500v8M1189.500 122.500l3.500 3.500 3.500-3.500M1187.500 129.500h11" fill="none" stroke="#e4e4e4" stroke-width="1.300"/>
<path d="M1218 121v-3.500h10v3.500M1218 128h-1.500v-7h13v7H1228M1219 125.500h8v5h-8Z" fill="none" stroke="#e4e4e4" stroke-width="1.300"/>
<circle cx="1253" cy="119.500" r="1.200" fill="#e4e4e4"/><circle cx="1253" cy="124.500" r="1.200" fill="#e4e4e4"/><circle cx="1253" cy="129.500" r="1.200" fill="#e4e4e4"/>

<!-- PDF content -->
<rect x="863" y="147" width="417" height="533" fill="#fdfdfd"/>
<rect x="863" y="147" width="32" height="520" fill="url(#edge)"/>
<rect x="1267" y="147" width="13" height="533" fill="#f4f4f4"/>
<rect x="863" y="201" width="387" height="1" fill="#777"/>
<g stroke="#777" fill="none" stroke-width=".8">
<path d="M930 147V171M1048 147V171M930 166.500H975M1000 166.500H1048M982 147v3M1000 147v3M1010 147v3"/>
<rect x="1131.500" y="157.500" width="118" height="44"/><path d="M1131.500 171.500H1249.500M1131.500 186.500H1249.500"/>
<path d="M1249.500 147V157.500"/>
</g>
<text x="949" y="150" font-size="8" fill="#999">1.50</text><text x="1025" y="150" font-size="8" fill="#999">.25</text>
<text x="979" y="170" font-size="8" fill="#777" textLength="17">3.00</text>
<text x="945" y="193" font-size="8.500" fill="#666" textLength="80" lengthAdjust="spacingAndGlyphs">CAMInstructor.COM</text>
<text x="1149" y="168" font-size="8" fill="#777" textLength="80" lengthAdjust="spacingAndGlyphs">Mill Lesson #3 Exercise</text>
<text x="1134" y="181" font-size="8" fill="#666" textLength="95" lengthAdjust="spacingAndGlyphs">Material: Aluminum T6061</text>
<text x="1149" y="197" font-size="8" fill="#777" textLength="84" lengthAdjust="spacingAndGlyphs">All Dimensions in Inches</text>
<rect x="863" y="251" width="404" height="7" fill="#0c0c0c"/>
<path d="M864 307.500H1264.500V616.500H864" stroke="#a8a8a8" fill="none"/>
<rect x="874" y="318" width="378" height="286.500" fill="#fff" fill-opacity=".6" stroke="#5a5a5a"/>
<g clip-path="url(#part)">
<g filter="url(#b1)">
<path d="M1166 322H1243.700L1224.700 387.300H1146Z" fill="#a4a4a4"/>
<path d="M1243.700 322 1244 327 1226 390.500H1146V387.300H1224.700Z" fill="#666"/>
<g fill="#505050"><circle cx="1171" cy="327" r="3"/><circle cx="1168" cy="337" r="3"/><circle cx="1174" cy="346" r="3"/><circle cx="1182" cy="352" r="3"/><circle cx="1194" cy="354" r="3"/><circle cx="1206" cy="356" r="3"/><circle cx="1214" cy="362" r="3"/><circle cx="1218" cy="371" r="3"/><circle cx="1217" cy="381" r="3"/><circle cx="1213" cy="329" r="2"/><circle cx="1225" cy="327" r="2"/><circle cx="1203" cy="337" r="2"/><circle cx="1196" cy="346" r="2"/><circle cx="1191" cy="365" r="2"/><circle cx="1165" cy="365" r="2"/><circle cx="1166" cy="373" r="2"/><circle cx="1174" cy="376" r="2"/><circle cx="1185" cy="373" r="2"/></g>
</g>
<rect x="975.700" y="397.300" width="138.600" height="140" fill="none" stroke="#666"/>
<rect x="1198.300" y="397.300" width="11.400" height="140" fill="none" stroke="#666"/>
<path class="dl" d="M975.700 345V397M1114.300 345V397M976 346.500H1033M1058 346.500H1114M912 397.500H975M912 397.500V535M1045 378V530M1085 378V455M948 466.700H1142M1045 449.500H1140M1046 382H1052M1073 382H1085M1019 381H1027Q1040 395 1058 418M1105 361H1109L1090 405M975 421 985 414M958 454H970Q985 448 995 440M1032 478H1040L1047 470M960 522H966L1000 503M1103 510L1125 508H1130M1178 408H1186L1198 435M1134 436V449M1134 466V485M954 466V490M954 467V504"/>
<path class="dl" stroke-dasharray="8 2 2 2" d="M985 408.700H1100M950 489.700H1048M1022 489V525"/>
<path fill="#666" d="M976 346.500l7-1.500v3ZM1114 346.500l-7-1.500v3ZM912 397.500l-1.500 7h3Z"/>
<g class="c"><circle cx="1085.300" cy="408.700" r="4.300"/><circle cx="1065.300" cy="414.300" r="4.300"/><circle cx="1050.300" cy="429" r="4.300"/><circle cx="1045" cy="449.300" r="4.300"/><circle cx="1045" cy="489.700" r="4.300"/><circle cx="998.700" cy="489.700" r="4.300"/><circle cx="1005.700" cy="506" r="4.300"/><circle cx="1022" cy="512.700" r="4.300"/><circle cx="1038.300" cy="506" r="4.300"/></g>
<g class="c"><circle cx="987.300" cy="408.700" r="6"/><circle cx="991.700" cy="431" r="6"/><circle cx="1004.300" cy="449.700" r="6"/><circle cx="1022.700" cy="462.300" r="6"/><circle cx="1045" cy="466.700" r="6"/><circle cx="1067" cy="471" r="6"/><circle cx="1085.700" cy="483.300" r="6"/><circle cx="1098.300" cy="502" r="6"/><circle cx="1102.700" cy="524" r="6"/></g>
<path stroke="#888" stroke-width=".6" d="M987.300 401V416.400M991.700 424 991.700 438M999 445 1010 454M1018 458 1027 466M1041 467H1049M1062 467 1072 475M1081 479 1090 488M1093 497 1103 507"/>
<g class="d">
<text x="1036" y="349">3.00</text><text x="1032" y="362" textLength="69">Ø.1875(4) THRU</text><text x="1054" y="371" textLength="46">EQ. SPACED</text><text x="996" y="383" textLength="22">R.875</text><text x="1057" y="385" textLength="18">.875</text><text x="928" y="424" textLength="34">Ø.25(9)</text><text x="918" y="433" textLength="46">EQ. SPACED</text><text x="940" y="457" textLength="22">R1.25</text><text x="904" y="470" textLength="18">3.00</text><text x="1165" y="411" textLength="8">70</text><text x="1128" y="420" textLength="49">Top of Part</text><text x="1126" y="435" textLength="18">.375</text><text x="1006" y="481" textLength="18">X0Y0</text><text x="948" y="505" textLength="13">.50</text><text x="938" y="523" textLength="18">R.50</text><text x="1132" y="512" textLength="22">R1.25</text>
</g>
</g>
<path d="M908 535.500H1000" stroke="#999"/><path d="M912.500 527V535.500" stroke="#777"/><path fill="#666" d="M912.500 535l-1.500-7h3Z"/>

<!-- scrollbars -->
<path d="M1273 152l4.500 5h-9Z" fill="#8a8a8a"/>
<rect x="1269" y="637" width="7.500" height="15" rx="3.500" fill="#8a8a8a"/>
<path d="M1273 664l4.500-5h-9Z" fill="#777"/>
<rect x="863" y="664" width="404" height="3" fill="#111"/>
<rect x="863" y="667" width="404" height="13" fill="#f2f2f2"/>
<rect x="930" y="670" width="300" height="7" rx="3.500" fill="#a8a8a8"/>
<path d="M871 670l-5 3.500 5 3.500Z" fill="#888"/><path d="M1256 669l6 4-6 4Z" fill="#999"/>

<!-- WEBCAM -->
<g transform="translate(960 520) scale(.33333)" clip-path="url(#cam)">
<rect x="18" y="18" width="843" height="472" fill="url(#wall)"/>
<g filter="url(#b3)">
<rect x="650" y="170" width="120" height="130" fill="#a6a6a6"/>
<rect x="18" y="230" width="110" height="90" fill="#a6b0ac"/>
<rect x="18" y="18" width="340" height="80" fill="#cbcecd"/>
</g>
<g filter="url(#b2)">
<path d="M630 20H750V150L680 185 630 175Z" fill="#2a3650"/>
<path d="M690 18H755L750 150 690 180Z" fill="#1c2234"/>
<path d="M750 18H840L835 90 790 160 750 150Z" fill="#44454c"/>
<path d="M765 30l30 5 10 30-30 20ZM800 20l25 15-15 30Z" fill="#85858e"/>
<path d="M18 285 80 300 130 322 18 335Z" fill="#4e545c"/>
<path d="M18 320 150 320 240 340 330 340 290 400 260 470 225 470 120 395 18 340Z" fill="#8e9cac"/>
<path d="M18 322 120 322 160 340 70 345Z" fill="#a8d4dc"/>
<path d="M90 355 160 335 250 335 210 395 160 410Z" fill="#9ed0d6"/>
<path d="M130 385 220 340 245 345 195 440Z" fill="#767e8c"/>
<path d="M100 370 160 345 125 395Z" fill="#e2e8e2"/>
<path d="M18 340 100 370 225 470H18Z" fill="#dccdb8"/>
<rect x="18" y="465" width="210" height="25" fill="#4c2e32"/>
<path d="M225 330 270 268 380 275 432 322 340 350 280 345Z" fill="#7c80b4"/>
<path d="M640 297 720 262 860 255V295L740 305 700 300Z" fill="#543640"/>
<path d="M720 315 820 290 860 290V352L770 345 725 345Z" fill="#90aed0"/>
<path d="M770 348H860V358H770Z" fill="#3a3a48"/>
<rect x="760" y="358" width="101" height="132" fill="#c8c8c6"/>
<path d="M222 490 300 405 400 335 435 325 470 395 560 365 580 300 690 328 740 395 785 490Z" fill="#c2c9ca"/>
<path d="M575 305 690 328 740 395 785 490H640Z" fill="#a6b8c0"/>
<path d="M262 490 285 436 345 425 395 465 402 490Z" fill="#b48a7a"/>
<path d="M432 325 570 300 575 365 525 420 455 395Z" fill="#a27c68"/>
</g>
<g filter="url(#b4)">
<path d="M388 170 602 150 606 240 592 305 562 352 520 388 472 372 432 332 405 282 388 240Z" fill="#ab806a"/>
<ellipse cx="392" cy="248" rx="20" ry="32" fill="#a07660"/>
</g>
<path filter="url(#b2)" d="M358 135 385 72 432 36 482 24 550 30 590 60 608 115 595 160 550 135 490 130 430 150 405 170 396 208 372 182Z" fill="#17171b"/>
<g filter="url(#b0)">
<path d="M432 204 515 194 518 206 498 244 476 252 444 250 430 224Z" fill="none" stroke="#1c1414" stroke-width="10"/>
<path d="M548 196 620 187 616 214 588 238 556 238 542 214Z" fill="none" stroke="#1c1414" stroke-width="10"/>
<path d="M400 208 432 206M515 200 548 198" stroke="#1c1414" stroke-width="8"/>
<path d="M436 208 510 200 512 208 494 240 474 247 446 245 435 224Z" fill="#8a6a56"/>
<path d="M452 208 482 204 486 216 456 222Z" fill="#33241f"/>
<path d="M552 200 614 192 611 212 585 233 558 233 546 214Z" fill="#a4a4a0"/>
</g>
<path d="M510 240 524 235 536 285 504 288Z" fill="#bf9276" filter="url(#b2)"/>
<path d="M497 318 553 308 553 328 512 342Z" fill="#623430" filter="url(#b0)"/>
<path d="M526 318 552 313 550 321 529 325Z" fill="#d8ccc8" filter="url(#b0)"/>
<path d="M396 285V340M408 345V490M572 360V490" stroke="#eee" stroke-width="2.500" fill="none" filter="url(#b0)"/>
<circle cx="398" cy="258" r="10" fill="#2a2020" filter="url(#b0)"/>
</g>
</svg>
</body></html>
